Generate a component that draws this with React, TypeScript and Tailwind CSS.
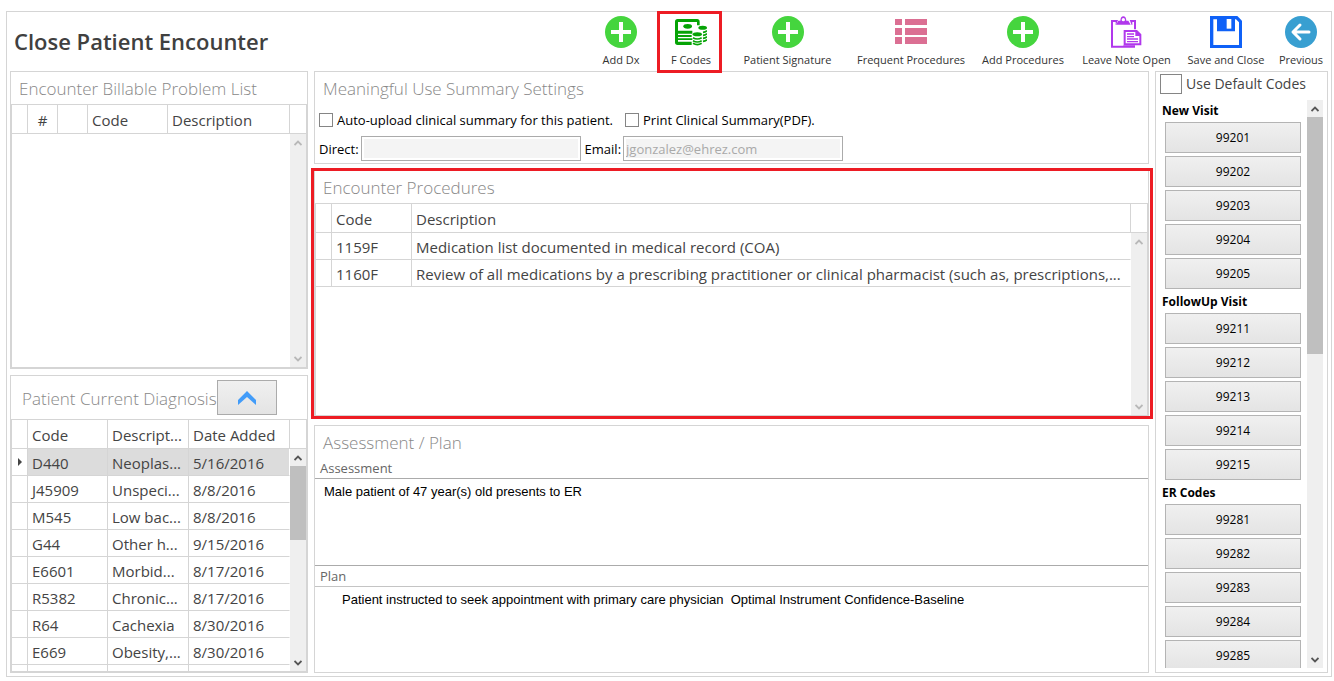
import type { ReactNode } from "react";

const LINE = "border-[#d5d5d5]";

function AddIcon() {
  return (
    <svg viewBox="0 0 32 32" className="size-8" aria-hidden="true">
      <circle cx="16" cy="16" r="16" fill="#45d53e" />
      <path d="M14 6h4v8h8v4h-8v8h-4v-8H6v-4h8z" fill="#fff" />
    </svg>
  );
}

function MoneyIcon() {
  return (
    <svg viewBox="0 0 96 96" className="size-8" aria-hidden="true">
      <g fill="#05a305">
        <path d="M8 9H66Q74 9 74 17V28H66V18H9V44H52V53H9V57H50V63H9V67H52V72H9V77H50V87H8Q0 87 0 79V17Q0 9 8 9Z" />
        <ellipse cx="38" cy="31" rx="13" ry="7" />
        <ellipse cx="83" cy="35" rx="13" ry="6" />
        <ellipse cx="67" cy="55" rx="14" ry="6" />
      </g>
      <g fill="none" stroke="#05a305" strokeWidth="5">
        <path d="M54 65Q67 73 80 65M54 74Q67 82 80 74M54 82Q67 90 80 82" />
        <path d="M84 49Q92 48 96 44M84 58Q92 57 96 53M84 67Q92 66 96 62M84 76Q92 75 96 71" />
      </g>
    </svg>
  );
}

function ListIcon() {
  return (
    <svg viewBox="0 0 32 32" className="size-8" aria-hidden="true">
      <path d="M0 3h7v6H0zM10 3h22v6H10zM0 12h7v7H0zM10 12h22v7H10zM0 21h7v7H0zM10 21h22v7H10z" fill="#db6f93" />
    </svg>
  );
}

function ClipboardIcon() {
  return (
    <svg viewBox="0 0 96 96" className="size-8" aria-hidden="true">
      <g fill="#b138ec">
        <path d="M0 12H21L15 27H62L56 12H75V40H69V18H64V27H14V18H6V89H37V88H72V95H0Z" />
        <path d="M15 26L22 14H28Q29 1 37 1T46 14H52L59 26ZM37 6A5 5 0 1 0 37 16A5 5 0 1 0 37 6Z" fillRule="evenodd" />
        <path d="M38 42H78L91 55V88H38ZM44 48V82H85V60H73V48Z" fillRule="evenodd" />
        <path d="M48 52H69V56H48ZM48 60H69V64H48ZM48 67H81V71H48ZM48 75H81V79H48Z" />
      </g>
    </svg>
  );
}

function SaveIcon() {
  return (
    <svg viewBox="0 0 96 96" className="size-8" aria-hidden="true">
      <path d="M0 0H82L96 14V96H0Z" fill="#0f61f7" />
      <path d="M10 10H21V46H75V10H78L87 19V87H10Z" fill="#fff" />
      <path d="M50 9H64V38H50Z" fill="#fff" />
    </svg>
  );
}

function BackIcon() {
  return (
    <svg viewBox="0 0 32 32" className="size-8" aria-hidden="true">
      <circle cx="16" cy="16" r="16" fill="#389fd1" />
      <path d="M24 16H9M15 9L8 16L15 23" fill="none" stroke="#fff" strokeWidth="3" strokeLinecap="round" strokeLinejoin="round" />
    </svg>
  );
}

function ScrollArrow({ up, active }: { up?: boolean; active?: boolean }) {
  return (
    <button
      type="button"
      aria-label={up ? "Scroll up" : "Scroll down"}
      className="flex h-[17px] w-full shrink-0 items-center justify-center"
    >
      <svg viewBox="0 0 8 6" className="h-1.5 w-2" aria-hidden="true">
        <path
          d={up ? "M0.5 5L4 1.5L7.5 5" : "M0.5 1L4 4.5L7.5 1"}
          fill="none"
          stroke={active ? "#555555" : "#b8b8b8"}
          strokeWidth="1.8"
        />
      </svg>
    </button>
  );
}

function ScrollBar({ thumb, active }: { thumb?: string; active?: boolean }) {
  return (
    <div className="flex min-h-0 w-4 flex-1 flex-col bg-[#efefef]">
      <ScrollArrow up active={active} />
      <div className="min-h-0 flex-1">{thumb && <div className={`bg-[#bfbfbf] ${thumb}`} />}</div>
      <ScrollArrow active={active} />
    </div>
  );
}

type Column = { label: string; width: string; center?: boolean };

function DataGrid({
  name,
  columns,
  rows,
  selected = -1,
  thumb,
  active,
}: {
  name: string;
  columns: Column[];
  rows: string[][];
  selected?: number;
  thumb?: string;
  active?: boolean;
}) {
  return (
    <div className={`flex min-h-0 flex-1 border ${LINE}`}>
      <div className="min-w-0 flex-1 overflow-x-hidden overflow-y-auto [scrollbar-width:none]">
        <table aria-label={name} className="w-full table-fixed border-separate border-spacing-0 text-[15px] leading-5 text-[#444444]">
          <thead>
            <tr>
              {columns.map((column, i) => (
                <th
                  key={i}
                  scope="col"
                  className={`h-[29px] truncate border-r border-b pt-px pb-0 font-normal ${LINE} ${column.width} ${
                    column.center ? "text-center" : "pl-1 text-left"
                  }`}
                >
                  {column.label}
                </th>
              ))}
            </tr>
          </thead>
          <tbody>
            {rows.map((row, r) => (
              <tr key={r} className="h-[27px]">
                <td className={`h-[27px] border-r border-b p-0 ${LINE}`}>
                  {r === selected && (
                    <svg viewBox="0 0 4 8" className="ml-1.5 h-2 w-1" aria-label="Current row">
                      <path d="M0 0L4 4L0 8Z" fill="#444" />
                    </svg>
                  )}
                </td>
                {row.map((cell, c) => (
                  <td
                    key={c}
                    className={`h-[27px] truncate border-r border-b pt-px pb-0 pl-1 border-b-[#d5d5d5] ${
                      c < row.length - 1 ? "border-r-[#d5d5d5]" : "border-r-white"
                    } ${r === selected ? "bg-[#dcdcdc]" : ""}`}
                  >
                    {cell}
                  </td>
                ))}
              </tr>
            ))}
          </tbody>
        </table>
      </div>
      <div className="flex w-4 shrink-0 flex-col">
        <div className={`h-[29px] shrink-0 border-b ${LINE}`} />
        <ScrollBar thumb={thumb} active={active} />
      </div>
    </div>
  );
}

function PanelTitle({ children }: { children: ReactNode }) {
  return (
    <h2 className="flex h-8 shrink-0 items-center pt-0.5 pl-2 text-[17px] leading-6 font-light text-[#888888]">{children}</h2>
  );
}

const actions = [
  { label: "Add Dx", icon: <AddIcon />, width: "w-[72px]" },
  { label: "F Codes", icon: <MoneyIcon />, width: "w-[66px] pl-0.5", marked: true },
  { label: "Patient Signature", icon: <AddIcon />, width: "w-[129px]" },
  { label: "Frequent Procedures", icon: <ListIcon />, width: "w-[118px]" },
  { label: "Add Procedures", icon: <AddIcon />, width: "w-[106px]" },
  { label: "Leave Note Open", icon: <ClipboardIcon />, width: "w-[101px]" },
  { label: "Save and Close", icon: <SaveIcon />, width: "w-[98px]" },
  { label: "Previous", icon: <BackIcon />, width: "w-[52px]" },
];

const diagnoses = [
  ["D440", "Neoplas...", "5/16/2016"],
  ["J45909", "Unspeci...", "8/8/2016"],
  ["M545", "Low bac...", "8/8/2016"],
  ["G44", "Other h...", "9/15/2016"],
  ["E6601", "Morbid...", "8/17/2016"],
  ["R5382", "Chronic...", "8/17/2016"],
  ["R64", "Cachexia", "8/30/2016"],
  ["E669", "Obesity,...", "8/30/2016"],
  ["", "", ""],
];

const procedures = [
  ["1159F", "Medication list documented in medical record (COA)"],
  [
    "1160F",
    "Review of all medications by a prescribing practitioner or clinical pharmacist (such as, prescriptions,...",
  ],
];

const codeGroups = [
  { title: "New Visit", codes: ["99201", "99202", "99203", "99204", "99205"] },
  { title: "FollowUp Visit", codes: ["99211", "99212", "99213", "99214", "99215"] },
  { title: "ER Codes", codes: ["99281", "99282", "99283", "99284", "99285"] },
];

const checkbox = "shrink-0 appearance-none border border-[#858585] bg-white checked:bg-[#4aa3f7]";
const textField =
  "h-[25px] w-[220px] border border-[#ababab] bg-[#f4f4f4] px-0.5 text-[#a9a9a9] ring-2 ring-white ring-inset";
const noteField =
  "min-h-0 flex-1 resize-none py-[5px] font-['Liberation_Sans',Arial,sans-serif] text-[13px] leading-4 text-black outline-none";

export default function App() {
  return (
    <main className="flex h-screen min-h-[600px] flex-col bg-white pt-[11px] pr-0.5 pb-1 pl-1.5 font-['Open_Sans','Noto_Sans',sans-serif]">
      <div className={`flex min-h-0 flex-1 flex-col border px-[3px] pb-[3px] ${LINE}`}>
        <header className="flex h-[59px] shrink-0 items-center justify-between pr-px pl-1">
          <h1 className="pb-0.5 text-[22px] leading-8 font-semibold whitespace-nowrap text-[#404040]">
            Close Patient Encounter
          </h1>
          <nav aria-label="Encounter actions" className="flex h-full">
            {actions.map((action) => (
              <button
                key={action.label}
                type="button"
                className={`relative flex flex-col items-center pt-1 text-[11px] leading-4 whitespace-nowrap text-[#333333] ${action.width}`}
              >
                {action.icon}
                <span className="mt-1">{action.label}</span>
                {action.marked && <span className="absolute -top-px right-px -bottom-0.5 left-0 z-10 border-3 border-[#ed1c24]" />}
              </button>
            ))}
          </nav>
        </header>

        <div className="flex min-h-0 flex-1 gap-1.5">
          <div className="flex w-[298px] shrink-0 flex-col gap-1.5">
            <section className={`flex min-h-0 flex-1 flex-col border ${LINE}`}>
              <PanelTitle>Encounter Billable Problem List</PanelTitle>
              <DataGrid
                name="Encounter Billable Problem List"
                columns={[
                  { label: "", width: "w-4" },
                  { label: "#", width: "w-[30px]", center: true },
                  { label: "", width: "w-[30px]" },
                  { label: "Code", width: "w-20" },
                  { label: "Description", width: "w-auto" },
                ]}
                rows={[]}
              />
            </section>
            <section className={`flex min-h-0 flex-1 flex-col border ${LINE}`}>
              <div className="flex h-[43px] shrink-0 items-center pl-[3px]">
                <PanelTitle>Patient Current Diagnosis</PanelTitle>
                <button
                  type="button"
                  aria-label="Move to billable problem list"
                  className="flex h-[35px] w-[60px] items-center justify-center border border-[#ababab] bg-linear-to-b from-[#f0f0f0] to-[#e4e4e4]"
                >
                  <svg viewBox="0 0 18 14" className="h-3.5 w-[18px]" aria-hidden="true">
                    <path d="M0 9L9 0L18 9V14L9 6L0 14Z" fill="#429cf9" />
                  </svg>
                </button>
              </div>
              <DataGrid
                name="Patient Current Diagnosis"
                columns={[
                  { label: "", width: "w-4" },
                  { label: "Code", width: "w-20" },
                  { label: "Descript...", width: "w-[81px]" },
                  { label: "Date Added", width: "w-auto" },
                ]}
                rows={diagnoses}
                selected={0}
                thumb="h-[74px]"
                active
              />
            </section>
          </div>

          <div className="flex min-w-0 flex-1 flex-col">
            <section className={`h-[93px] shrink-0 border ${LINE}`}>
              <PanelTitle>Meaningful Use Summary Settings</PanelTitle>
              <div className="flex h-8 items-center gap-3 pl-1 text-[13px] leading-5 text-black">
                <label className="flex items-center gap-1">
                  <input type="checkbox" className={`size-3.5 ${checkbox}`} />
                  Auto-upload clinical summary for this patient.
                </label>
                <label className="flex items-center gap-1">
                  <input type="checkbox" className={`size-3.5 ${checkbox}`} />
                  Print Clinical Summary(PDF).
                </label>
              </div>
              <div className="flex items-center gap-1 pl-1 text-[13px] leading-5 text-black">
                <label className="flex items-center gap-0.5">
                  Direct:
                  <input type="text" className={textField} />
                </label>
                <label className="flex items-center gap-0.5">
                  Email:
                  <input type="email" defaultValue="jgonzalez@ehrez.com" className={textField} />
                </label>
              </div>
            </section>

            <div className="mt-1 mr-[-4px] mb-1.5 ml-[-3px] flex h-[251px] shrink-0 flex-col border-3 border-[#ed1c24]">
              <section className={`mr-px flex min-h-0 flex-1 flex-col border-x ${LINE}`}>
                <PanelTitle>Encounter Procedures</PanelTitle>
                <DataGrid
                  name="Encounter Procedures"
                  columns={[
                    { label: "", width: "w-4" },
                    { label: "Code", width: "w-20" },
                    { label: "Description", width: "w-auto" },
                  ]}
                  rows={procedures}
                />
              </section>
            </div>

            <section className={`flex min-h-0 flex-1 flex-col border ${LINE}`}>
              <PanelTitle>Assessment / Plan</PanelTitle>
              <label htmlFor="assessment" className="h-5 shrink-0 pl-[5px] text-[13px] leading-5 text-[#666666]">
                Assessment
              </label>
              <textarea
                id="assessment"
                defaultValue="Male patient of 47 year(s) old presents to ER"
                className={`border-y border-[#ababab] px-[9px] ${noteField}`}
              />
              <label htmlFor="plan" className="h-5 shrink-0 pl-[5px] text-[13px] leading-5 text-[#666666]">
                Plan
              </label>
              <textarea
                id="plan"
                defaultValue="Patient instructed to seek appointment with primary care physician  Optimal Instrument Confidence-Baseline"
                className={`border-t border-[#c4c4c4] px-[27px] ${noteField}`}
              />
            </section>
          </div>

          <aside className={`flex w-[173px] shrink-0 flex-col border pb-1 ${LINE}`}>
            <label className="flex h-7 shrink-0 items-center gap-1 pb-1 pl-1 text-[14px] leading-5 whitespace-nowrap text-[#444444]">
              <input type="checkbox" className={`h-5 w-[22px] ${checkbox}`} />
              Use Default Codes
            </label>
            <div className="flex min-h-0 flex-1 pr-1">
              <div className="min-w-0 flex-1 overflow-y-auto px-1.5 [scrollbar-width:none]">
                {codeGroups.map((group) => (
                  <section key={group.title}>
                    <h3 className="h-[21px] pt-px text-xs leading-5 font-bold text-black">{group.title}</h3>
                    <div className="flex flex-col gap-[3px] pt-px pb-0.5 pl-[3px]">
                      {group.codes.map((code) => (
                        <button
                          key={code}
                          type="button"
                          className="h-[31px] border border-[#b4b4b4] bg-linear-to-b from-[#f0f0f0] to-[#e4e4e4] pt-px text-xs leading-4 text-black"
                        >
                          {code}
                        </button>
                      ))}
                    </div>
                  </section>
                ))}
              </div>
              <div className="flex shrink-0 flex-col">
                <ScrollBar thumb="h-[237px]" active />
              </div>
            </div>
          </aside>
        </div>
      </div>
    </main>
  );
}
